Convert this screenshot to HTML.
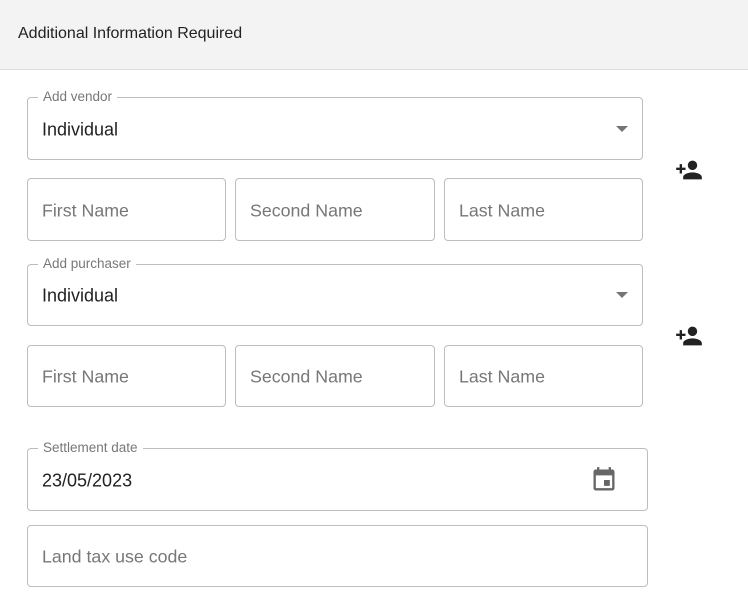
<!DOCTYPE html>
<html><head><style>
body{margin:0;width:748px;height:597px;background:#fff;font-family:"Liberation Sans",sans-serif;position:relative;overflow:hidden}
.hdr{position:absolute;left:0;top:0;width:748px;height:69px;background:#f3f3f3;border-bottom:1px solid #dcdcdc}
.hdr span{position:absolute;left:18px;top:25px;font-size:16px;color:#222}
.f{position:absolute;border:1px solid #bdbdbd;border-radius:4px;box-sizing:border-box}
.f .v{position:absolute;left:14px;top:50%;transform:translateY(-50%);margin-top:1px;font-size:18px;color:#222}
.f .p{position:absolute;left:14px;top:50%;transform:translateY(-50%);margin-top:1px;font-size:17.8px;color:#777}
.lbl{position:absolute;left:10px;top:-9px;background:#fff;padding:0 5px;font-size:13.5px;color:#777}
.arr{position:absolute;right:14px;top:50%;margin-top:-3px;width:0;height:0;border-left:6px solid transparent;border-right:6px solid transparent;border-top:6px solid #757575}
svg{position:absolute}
</style></head><body>
<div class="hdr"><span>Additional Information Required</span></div>

<div class="f" style="left:27px;top:97px;width:616px;height:63px"><div class="lbl">Add vendor</div><div class="v">Individual</div><div class="arr"></div></div>
<div class="f" style="left:27px;top:178px;width:199px;height:63px"><div class="p">First Name</div></div>
<div class="f" style="left:235px;top:178px;width:200px;height:63px"><div class="p">Second Name</div></div>
<div class="f" style="left:444px;top:178px;width:199px;height:63px"><div class="p">Last Name</div></div>
<svg style="left:675px;top:156px" width="28" height="28" viewBox="0 0 24 24"><path fill="#222" d="M15 12c2.2 0 4-1.8 4-4s-1.8-4-4-4-4 1.8-4 4 1.8 4 4 4zm-9-2V7H4v3H1v2h3v3h2v-3h3v-2H6zm9 4c-2.7 0-8 1.3-8 4v2h16v-2c0-2.7-5.3-4-8-4z"/></svg>

<div class="f" style="left:27px;top:264px;width:616px;height:62px"><div class="lbl">Add purchaser</div><div class="v">Individual</div><div class="arr"></div></div>
<div class="f" style="left:27px;top:345px;width:199px;height:62px"><div class="p">First Name</div></div>
<div class="f" style="left:235px;top:345px;width:200px;height:62px"><div class="p">Second Name</div></div>
<div class="f" style="left:444px;top:345px;width:199px;height:62px"><div class="p">Last Name</div></div>
<svg style="left:675px;top:322px" width="28" height="28" viewBox="0 0 24 24"><path fill="#222" d="M15 12c2.2 0 4-1.8 4-4s-1.8-4-4-4-4 1.8-4 4 1.8 4 4 4zm-9-2V7H4v3H1v2h3v3h2v-3h3v-2H6zm9 4c-2.7 0-8 1.3-8 4v2h16v-2c0-2.7-5.3-4-8-4z"/></svg>

<div class="f" style="left:27px;top:448px;width:621px;height:63px"><div class="lbl">Settlement date</div><div class="v">23/05/2023</div></div>
<svg style="left:590px;top:466px" width="28" height="28" viewBox="0 0 24 24"><path fill="#666" d="M17 12h-5v5h5v-5zM16 1v2H8V1H6v2H5c-1.1 0-2 .9-2 2v14c0 1.1.9 2 2 2h14c1.1 0 2-.9 2-2V5c0-1.1-.9-2-2-2h-1V1h-2zm3 18H5V8h14v11z"/></svg>

<div class="f" style="left:27px;top:525px;width:621px;height:62px"><div class="p">Land tax use code</div></div>
</body></html>
